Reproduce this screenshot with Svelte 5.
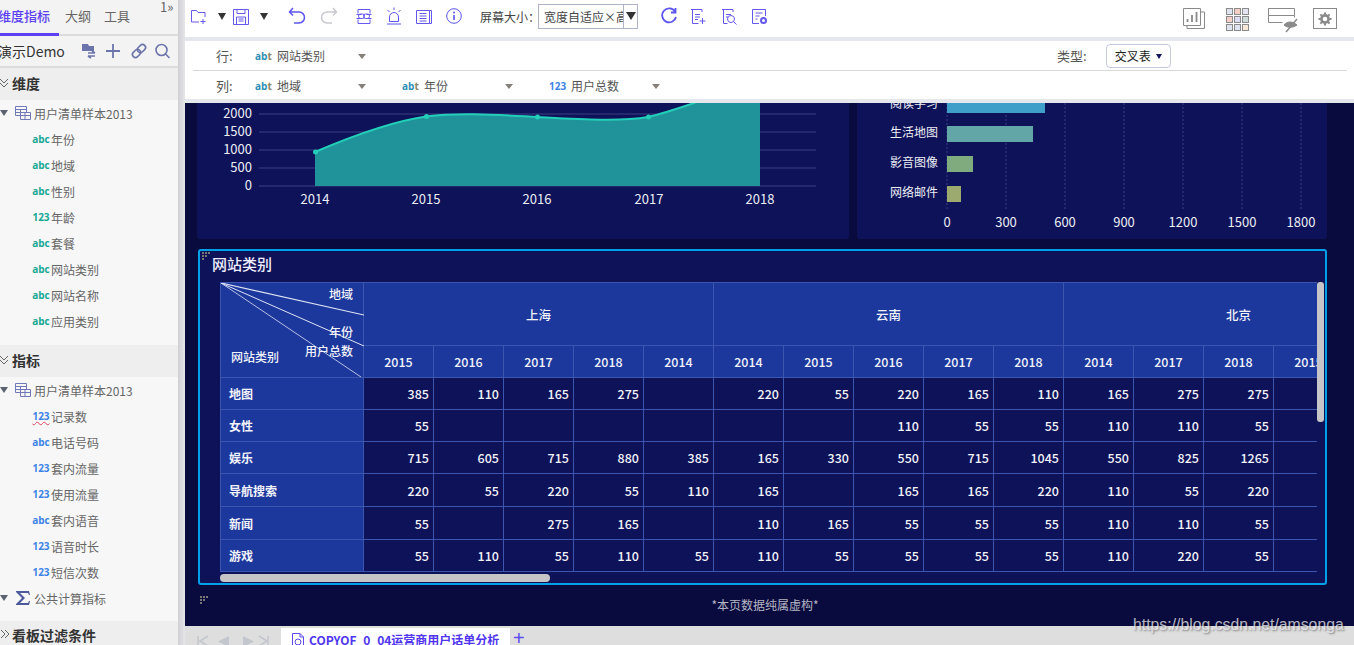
<script>
  const dims = [['abc','年份'],['abc','地域'],['abc','性别'],['123','年龄'],['abc','套餐'],['abc','网站类别'],['abc','网站名称'],['abc','应用类别']];
  const metrics = [['123','记录数',true],['abc','电话号码'],['123','套内流量'],['123','使用流量'],['abc','套内语音'],['123','语音时长'],['123','短信次数']];
  const years = ['2015','2016','2017','2018','2014','2014','2015','2016','2017','2018','2014','2017','2018','2015','2016'];
  const rows = [
    ['地图',385,110,165,275,'',220,55,220,165,110,165,275,275,'',''],
    ['女性',55,'','','','','','',110,55,55,110,110,55,'',''],
    ['娱乐',715,605,715,880,385,165,330,550,715,1045,550,825,1265,'',''],
    ['导航搜索',220,55,220,55,110,165,'',165,165,220,110,55,220,'',''],
    ['新闻',55,'',275,165,'',110,165,55,55,55,110,110,55,'',''],
    ['游戏',55,110,55,110,55,110,55,55,55,55,110,220,55,'','']
  ];
  const heights = [32,32,32,33,33,32];
  const grid = [114,132,150,168,186];
  const yl = ['2000','1500','1000','500','0'];
  const xl = [['2014',315],['2015',426],['2016',537],['2017',649],['2018',760]];
  const ticks = [[0,947],[300,1006],[600,1065],[900,1124],[1200,1183],[1500,1242],[1800,1301]];
  const bars = [['阅读学习',97,98,16,'#3f9fc9'],['生活地图',126,86,16,'#62a6a8'],['影音图像',156,26,16,'#80ab7f'],['网络邮件',186,14,16,'#9ca96f']];
  const tints = ['#dfe3ef','#f5cfc6','#e4e4f0','#f3cfc8','#dcdcf2','#cfdbd8','#dfe3ef','#dfe3f2','#f8e8d8'];
  const curve = 'M315 152C350 137 395 121 426 116.5C460 112 500 115 537 117C575 119 620 122 648 117C670 112 690 104 712 97L760 84';
</script>

<div class="page">
  <aside class="side">
    <div class="tabs">
      <span class="tab on">维度指标</span><span class="tab">大纲</span><span class="tab">工具</span>
      <span class="fold">1»</span>
    </div>
    <div class="demo">
      <span class="demoname">演示Demo</span>
      <svg class="demoicons" width="100" height="20" viewBox="0 0 100 20" fill="none" stroke="#6c75ab" stroke-width="1.6">
        <g transform="translate(5 0)"><path d="M3 3h6l1 2h5v5H3z" fill="#6c75ab" stroke="none"/><path d="M9 12h7M13 10l3 2M16 15H9M12 17l-3-2"/></g>
        <path d="M39 3v14M32 10h14" stroke-width="1.8"/>
        <g transform="rotate(-45 65 10)"><rect x="57" y="7" width="9" height="6" rx="3"/><rect x="64" y="7" width="9" height="6" rx="3"/></g>
        <circle cx="87.500" cy="9" r="5.500"/><path d="M91.500 13l4 4"/>
      </svg>
    </div>
    <div class="sec">
      <svg class="chev" width="10" height="10" viewBox="0 0 10 10" fill="none" stroke="#666"><path d="M0 1l4 4 4-4M0 5l4 4 4-4"/></svg>维度
    </div>
    <div class="tree">
      <div class="node">
        <span class="tri"></span>
        <svg class="ds" width="16" height="14" viewBox="0 0 16 14" fill="none" stroke="#7078b8"><path d="M.5.5h11v9H.5zM.5 3.500h11M5.500 3.500v6M.5 6.500h11"/><path d="M5.500 6.500h10v7h-10z" fill="#f7f7f8"/><path d="M5.500 9.500h10M10 6.500v7"/></svg>
        用户清单样本2013
      </div>
      {#each dims as d}
        <div class="leaf"><span class="t g">{d[0]}</span>{d[1]}</div>
      {/each}
    </div>
    <div class="sec second">
      <svg class="chev" width="10" height="10" viewBox="0 0 10 10" fill="none" stroke="#666"><path d="M0 1l4 4 4-4M0 5l4 4 4-4"/></svg>指标
    </div>
    <div class="tree">
      <div class="node">
        <span class="tri"></span>
        <svg class="ds" width="16" height="14" viewBox="0 0 16 14" fill="none" stroke="#7078b8"><path d="M.5.5h11v9H.5zM.5 3.500h11M5.500 3.500v6M.5 6.500h11"/><path d="M5.500 6.500h10v7h-10z" fill="#f7f7f8"/><path d="M5.500 9.500h10M10 6.500v7"/></svg>
        用户清单样本2013
      </div>
      {#each metrics as d}
        <div class="leaf"><span class="t b" class:wavy={d[2]}>{d[0]}</span>{d[1]}</div>
      {/each}
      <div class="node">
        <span class="tri"></span>
        <svg class="ds" width="16" height="14" viewBox="0 0 16 14"><path d="M1 0h13l1 4h-1l-1-2H5l5 5-5 5h8l1-2h1l-1 4H1v-1l6-6-6-6z" fill="#4f5a9c"/></svg>
        公共计算指标
      </div>
    </div>
    <div class="sec last">
      <svg class="chev" width="10" height="10" viewBox="0 0 10 10" fill="none" stroke="#666"><path d="M1 0l4 4-4 4M5 0l4 4-4 4"/></svg>看板过滤条件
    </div>
  </aside>
  <div class="shade"></div>

  <main class="main">
    <header class="bar">
      <div class="tools">
        <svg width="16" height="17" viewBox="0 0 16 17" fill="none" stroke="#6459ee"><path d="M8 14H.5V2.500h5l1.500 2h7V9M12 11v5M9.500 13.500h5"/></svg>
        <span class="drop"></span>
        <svg class="save" width="16" height="17" viewBox="0 0 16 17" fill="none" stroke="#6459ee"><path d="M.5 1.500h15v15H.5zM4 1.500v4h8v-4M3.500 16v-7h9v7M5.500 11h5M5.500 13h5"/></svg>
        <span class="drop"></span>
        <svg class="undo" width="18" height="18" viewBox="0 0 18 18" fill="none" stroke="#5b55ee" stroke-width="1.500"><path d="M5 1L1.500 5 5 8.500M2 5h9a5.500 5.500 0 0 1 0 11H6"/></svg>
        <svg class="redo" width="18" height="18" viewBox="0 0 18 18" fill="none" stroke="#c9c9d0" stroke-width="1.500"><path d="M13 1l3.500 4L13 8.500M16 5H7a5.500 5.500 0 0 0 0 11h5"/></svg>
        <svg class="ln" width="16" height="17" viewBox="0 0 16 17" fill="none" stroke="#6459ee"><path d="M2 5.500V1.500h12v4M2 11.500v4h12v-4M.5 6.500h5M10.500 6.500h5M.5 10.500h5M10.500 10.500h5"/><rect x="2.500" y="6" width="6" height="4.500" rx="2"/><rect x="7.500" y="6" width="6" height="4.500" rx="2"/></svg>
        <svg class="al" width="16" height="18" viewBox="0 0 16 18" fill="none" stroke="#5b55ee"><path d="M1 17h14M3.500 14.500h9V10a4.500 4.500 0 0 0-9 0zM8 .5v2.500M1.500 3l2 2M14.500 3l-2 2"/></svg>
        <svg class="li" width="16" height="16" viewBox="0 0 16 16" fill="none" stroke="#6459ee"><path d="M.5 2.500h13v13H.5zM13.500 2.500h2v13h-2M3.500 5.500h7M3.500 8h7M3.500 10.500h7M3.500 13h7"/></svg>
        <svg class="in" width="16" height="16" viewBox="0 0 16 16" fill="none" stroke="#5b55ee"><circle cx="8" cy="8" r="7.300"/><path d="M8 7v5" stroke-width="1.600"/><circle cx="8" cy="4.500" r="1" fill="#5b55ee" stroke="none"/></svg>
        <span class="size">屏幕大小：</span>
        <div class="sel"><span class="seltxt">宽度自适应×高度自适应</span><span class="selbtn"><i class="drop"></i></span></div>
        <svg class="rf" width="18" height="18" viewBox="0 0 18 18" fill="none" stroke="#5b55ee" stroke-width="1.800"><path d="M15 4.500A7 7 0 1 0 16 10M15.500 1v4.500H11"/></svg>
        <svg class="r2" width="16" height="17" viewBox="0 0 16 17" fill="none" stroke="#6459ee"><path d="M1 1.500h11v2.500M2.500 2v13.500h6M5 6.500h5M5 9h5M5 11.500h3M12.500 10v6M9.500 13h6"/></svg>
        <svg class="r3" width="16" height="17" viewBox="0 0 16 17" fill="none" stroke="#6459ee"><path d="M1 1.500h11v2.500M2.500 2v13.500h4M5 6.500h5M5 9h2"/><circle cx="10" cy="11" r="3.500"/><path d="M12.500 13.500l3 3"/></svg>
        <svg class="r4" width="16" height="17" viewBox="0 0 16 17" fill="none" stroke="#6459ee"><path d="M7 15.500H.5V1.500h13V8M3.500 5h7M3.500 8h4M3.500 11h2"/><circle cx="11.500" cy="12.500" r="2.500" stroke-width="2"/></svg>
      </div>
      <div class="rtools">
        <svg width="22" height="21" viewBox="0 0 22 21" fill="none" stroke="#8a8a8a"><path d="M.5.500h17v17H.5zM17.500 4h4v16.500H4v-3"/><path d="M4.500 14v-3M9 14V7M13.500 14V4" stroke-width="1.800"/></svg>
        <div class="palette">{#each tints as c}<i style="background:{c}"></i>{/each}</div>
        <svg class="eye" width="31" height="30" viewBox="0 0 31 30" fill="none" stroke="#8a8a8a"><path d="M.5 4.500h26v7h-26zM.5 4.500v14h14M26.500 11.500v2"/><path d="M16 21c3-4 9-4 13 0-4 3-10 3-13 0z" fill="#8a8a8a"/><path d="M18 28L29 15" stroke-width="1.500"/></svg>
        <div class="gear">
          <svg width="14" height="14" viewBox="0 0 14 14" fill="none" stroke="#8a8a8a"><circle cx="7" cy="7" r="3.600" stroke-width="2.600"/><path d="M7 .5v2M7 11.500v2M.5 7h2M11.500 7h2M2.400 2.400l1.400 1.400M10.200 10.200l1.400 1.400M11.600 2.400l-1.400 1.400M3.800 10.200l-1.400 1.400" stroke-width="2"/></svg>
        </div>
      </div>
    </header>

    <section class="filters">
      <div class="frow top">
        <span class="flabel">行:</span>
        <div class="pick"><b class="abt">ab<em>t</em></b><span>网站类别</span><i class="caret"></i></div>
        <div class="type"><span>类型:</span><div class="typesel">交叉表<i class="drop small"></i></div></div>
      </div>
      <div class="frow">
        <span class="flabel">列:</span>
        <div class="pick"><b class="abt">ab<em>t</em></b><span>地域</span><i class="caret"></i></div>
        <div class="pick"><b class="abt">ab<em>t</em></b><span>年份</span><i class="caret"></i></div>
        <div class="pick"><b class="n123">123</b><span>用户总数</span><i class="caret"></i></div>
      </div>
    </section>

    <section class="canvas">
      <div class="charts">
        <div class="card c1">
          <svg width="652" height="136" viewBox="197 103 652 136">
            {#each grid as g, i}
              <line x1="259" x2="816" y1={g} y2={g} stroke="#3a3f80"/>
              <text x="252" y={g + 4} text-anchor="end" class="ax">{yl[i]}</text>
            {/each}
            <path d={curve + 'V186H315Z'} fill="#209299"/>
            <path d={curve} fill="none" stroke="#22cfb8" stroke-width="2"/>
            <circle cx="315.500" cy="152" r="2.500" fill="#22cfb8"/><circle cx="426.500" cy="116.500" r="2.500" fill="#22cfb8"/><circle cx="537.500" cy="117" r="2.500" fill="#22cfb8"/><circle cx="648.500" cy="117" r="2.500" fill="#22cfb8"/>
            {#each xl as x}<text x={x[1]} y="204" text-anchor="middle" class="ax">{x[0]}</text>{/each}
          </svg>
        </div>
        <div class="card c2">
          <svg width="470" height="136" viewBox="857 103 470 136">
            {#each ticks as t}
              <line x1={t[1]} x2={t[1]} y1="103" y2="209" stroke="#3a3f80" stroke-dasharray="2 2"/>
              <text x={t[1]} y="227" text-anchor="middle" class="ax">{t[0]}</text>
            {/each}
            {#each bars as b}
              <rect x="947" y={b[1]} width={b[2]} height={b[3]} fill={b[4]}/>
              <text x="938" y={b[1] + 11} text-anchor="end" class="lb">{b[0]}</text>
            {/each}
          </svg>
        </div>
      </div>

      <div class="panel">
        <svg class="grip" width="8" height="8" viewBox="0 0 8 8" fill="#777"><path d="M0 0h2v2H0zM3 0h2v2H3zM6 0h2v2H6zM0 3h2v2H0zM3 3h2v2H3zM0 6h2v2H0z"/></svg>
        <div class="ptitle">网站类别</div>
        <div class="tw">
          <table>
            <colgroup><col class="c0"/>{#each Array(15) as _}<col class="cn"/>{/each}</colgroup>
            <thead>
              <tr class="h1">
                <th rowspan="2" class="corner">
                  <svg class="diag" width="143" height="95" viewBox="0 0 143 95" fill="none" stroke="#dfe3f5">
                    <path d="M0 0L143 32" stroke-width="1.200"/><path d="M0 0L143 63"/><path d="M0 0L140 94" stroke-width=".8"/>
                  </svg>
                  <span class="cl a">地域</span><span class="cl b2">年份</span><span class="cl c3">用户总数</span><span class="cl d">网站类别</span>
                </th>
                <th colspan="5">上海</th><th colspan="5">云南</th><th colspan="5">北京</th>
              </tr>
              <tr class="h2">{#each years as y}<th>{y}</th>{/each}</tr>
            </thead>
            <tbody>
              {#each rows as r, i}
                <tr style="height:{heights[i]}px">
                  <th class="rh">{r[0]}</th>
                  {#each r.slice(1) as v}<td>{v}</td>{/each}
                </tr>
              {/each}
            </tbody>
          </table>
        </div>
        <span class="hbar"></span>
        <span class="vbar"></span>
      </div>

      <div class="foot">
        <svg class="grip2" width="8" height="8" viewBox="0 0 8 8" fill="#777"><path d="M0 0h2v2H0zM3 0h2v2H3zM6 0h2v2H6zM0 3h2v2H0zM3 3h2v2H3zM0 6h2v2H0z"/></svg>
        *本页数据纯属虚构*
      </div>
    </section>

    <footer class="sheets">
      <svg class="nav" width="72" height="12" viewBox="0 0 72 12" fill="#c3c6cc">
        <path d="M1 1v10M11 1L3 6l8 5" fill="none" stroke="#c3c6cc" stroke-width="1.500"/><path d="M32 1L21 6.500 32 12zM46 1l11 5.500L46 12z"/><path d="M62 1l8 5-8 5M71 1v10" fill="none" stroke="#c3c6cc" stroke-width="1.500"/>
      </svg>
      <div class="sheet">
        <svg width="14" height="16" viewBox="0 0 14 16" fill="none" stroke="#5b4bf0"><path d="M9 .5H1.500v15h11V4zM9 .5V4h3.500"/><circle cx="7" cy="9" r="3"/></svg>
        COPYOF_0_04运营商用户话单分析
      </div>
      <span class="plus">+</span>
    </footer>
  </main>
  <span class="wm">https://blog.csdn.net/amsonga</span>
</div>

<style>
  :global(body) { margin: 0; background: #fff; }
  * { box-sizing: border-box; }
  .page { position: relative; display: flex; width: 1354px; height: 645px; overflow: hidden; font-family: "Noto Sans CJK SC", "Noto Sans", sans-serif; color: #444; font-size: 12px; }

  .side { width: 178px; flex: none; background: #f7f7f8; overflow: hidden; }
  .shade { width: 7px; flex: none; background: linear-gradient(90deg, #cfcfd4, #e6e6ea); }
  .tabs { position: relative; height: 36px; display: flex; border-bottom: 2px solid #dcdcdc; background: #f3f3f4; }
  .tab { font-size: 13px; line-height: 32px; color: #666; margin-right: 13px; }
  .tab.on { width: 59px; margin-right: 6px; color: #5b3ff0; text-indent: -2px; font-weight: 500; border-bottom: 3px solid #5b3ff0; height: 36px; white-space: nowrap; }
  .fold { position: absolute; left: 160px; top: -3px; font-size: 13px; color: #666; }
  .demo { height: 32px; display: flex; align-items: center; justify-content: space-between; border-bottom: 2px solid #dcdcdc; background: #f3f3f4; }
  .demoname { margin-left: -2px; font-size: 14px; color: #333; }
  .demoicons { margin-right: 4px; }
  .sec { height: 32px; padding-bottom: 3px; background: #eeeeef; font-size: 14px; font-weight: 700; color: #333; display: flex; align-items: center; gap: 2px; }
  .sec.second { margin-top: 11px; }
  .chev { flex: none; margin-top: 1px; }
  .sec.last { margin-top: 10px; height: 30px; }
  .node, .leaf { height: 26px; display: flex; align-items: center; color: #666; white-space: nowrap; }
  .tri { width: 0; height: 0; margin: 0 6px 0 0; border: 4px solid transparent; border-top: 6px solid #5c6270; border-bottom: 0; }
  .ds { margin: 0 3px 0 1px; flex: none; }
  .leaf { padding-left: 31px; }
  .t { width: 20px; font-size: 10px; font-weight: 700; text-align: center; font-family: "Open Sans", sans-serif; }
  .t.g { color: #17a893; }
  .t.b { color: #3d84e6; }
  .wavy { text-decoration: underline wavy #e0455f 1px; }

  .main { flex: 1; min-width: 0; display: flex; flex-direction: column; background: #e6e7ec; }
  .bar { height: 37px; flex: none; background: #fff; display: flex; align-items: center; justify-content: space-between; padding: 0 17px 0 6px; }
  .tools { display: flex; align-items: center; padding-bottom: 5px; }
  .drop { display: inline-block; width: 0; height: 0; margin: 0 0 0 11px; border: 4px solid transparent; border-top: 7px solid #333; border-bottom: 0; }
  .save { margin-left: 7px; }
  .undo { margin-left: 20px; }
  .redo { margin-left: 14px; }
  .ln { margin-left: 18px; }
  .al, .li, .in { margin-left: 14px; }
  .size { margin-left: 18px; color: #444; white-space: nowrap; }
  .sel { width: 100px; height: 25px; display: flex; border: 1px solid #aeb3c7; margin-left: -2px; background: #fff; color: #444; }
  .seltxt { width: 84px; overflow: hidden; white-space: nowrap; line-height: 23px; padding-left: 5px; }
  .selbtn { flex: 1; border-left: 1px solid #aeb3c7; display: flex; align-items: center; justify-content: center; }
  .selbtn .drop { margin: 0; border-width: 5px; border-top-width: 8px; border-bottom-width: 0; }
  .rf { margin-left: 22px; }
  .r2 { margin-left: 12px; }
  .r3, .r4 { margin-left: 15px; }
  .rtools { display: flex; align-items: center; }
  .palette { display: grid; grid-template-columns: repeat(3, 7px); grid-auto-rows: 7px; gap: 1px; width: 23px; height: 21px; margin-left: 21px; }
  .palette i { display: block; border: 1px solid #8a8a8a; }
  .eye { margin-left: 19px; }
  .gear { width: 24px; height: 21px; border: 1px solid #8a8a8a; display: flex; align-items: center; justify-content: center; margin-left: 14px; }

  .filters { margin-top: 4px; height: 58px; flex: none; background: #fff; padding: 0 7px 0 8px; }
  .frow { height: 29px; display: flex; align-items: center; color: #555; }
  .frow.top { height: 30px; border-bottom: 1px solid #d9d9d9; }
  .flabel { width: 62px; padding-left: 23px; font-size: 13px; color: #555; flex: none; }
  .pick { width: 147px; flex: none; display: flex; align-items: center; position: relative; white-space: nowrap; }
  .abt { width: 22px; font-size: 10px; font-family: "Open Sans", sans-serif; color: #2d8fb5; }
  .abt em { color: #8c8468; font-style: normal; }
  .n123 { width: 22px; font-size: 10px; font-family: "Open Sans", sans-serif; color: #3d84e6; }
  .caret { position: absolute; left: 103px; top: 7px; border: 4px solid transparent; border-top: 5px solid #85817a; border-bottom: 0; }
  .type { margin-left: 655px; display: flex; align-items: center; gap: 19px; font-size: 13px; }
  .typesel { width: 65px; height: 24px; border: 1px solid #c5c9de; border-radius: 4px; color: #222; font-size: 12px; line-height: 22px; padding-left: 8px; white-space: nowrap; }
  .drop.small { margin: 0 0 2px 5px; border-width: 3px; border-top-width: 5px; border-bottom-width: 0; border-top-color: #14155e; }

  .canvas { margin-top: 4px; height: 523px; flex: none; background: #090a3e; padding-left: 12px; overflow: hidden; position: relative; }
  .charts { display: flex; gap: 8px; height: 136px; }
  .card { background: #0e1258; height: 136px; border-radius: 0 0 3px 3px; }
  .c1 { width: 652px; }
  .c2 { width: 470px; }
  .card svg { display: block; }
  .ax { fill: #eceef6; font-size: 13px; font-family: "Noto Sans CJK SC", sans-serif; }
  .lb { fill: #eceef6; font-size: 12px; font-family: "Noto Sans CJK SC", sans-serif; }

  .panel { position: relative; margin: 10px 0 0 1px; width: 1129px; height: 336px; background: #0e1258; border: 2px solid #00a0e9; border-radius: 3px; }
  .grip { position: absolute; left: 2px; top: 1px; }
  .ptitle { height: 31px; padding: 2px 0 0 12px; color: #eef; font-size: 15px; font-weight: 500; }
  .tw { margin-left: 20px; width: 1097px; height: 293px; overflow: hidden; }
  table { border-collapse: collapse; table-layout: fixed; width: 1193px; color: #f2f3fa; font-size: 12.500px; }
  .c0 { width: 143px; }
  .cn { width: 70px; }
  th, td { border: 1px solid #3c55ae; padding: 0; font-weight: 500; }
  thead th { background: #1c389c; text-align: center; }
  .h1 { height: 63px; }
  .h2 { height: 32px; }
  td { text-align: right; padding-right: 4px; }
  .rh { background: #1c389c; text-align: left; padding-left: 8px; font-size: 12px; font-weight: 700; }
  .corner { position: relative; }
  .diag { position: absolute; left: 0; top: 0; }
  .cl { position: absolute; font-size: 12px; line-height: 14px; color: #f2f3fa; white-space: nowrap; }
  .a { right: 10px; top: 4px; }
  .b2 { right: 10px; top: 42px; }
  .c3 { right: 10px; top: 61px; }
  .d { left: 10px; top: 67px; }
  .hbar { position: absolute; left: 20px; top: 323px; width: 330px; height: 8px; background: #c6c6c8; border-radius: 4px; }
  .vbar { position: absolute; left: 1117px; top: 31px; width: 7px; height: 140px; background: #c6c6c8; border-radius: 3px; }
  .foot { position: relative; width: 1136px; height: 40px; text-align: center; color: #b5b6c4; line-height: 40px; font-size: 12px; }
  .grip2 { position: absolute; left: 3px; top: 11px; }

  .sheets { flex: 1; background: #dedede; display: flex; align-items: flex-start; padding: 2px 0 0 12px; overflow: hidden; }
  .nav { margin-top: 7px; flex: none; }
  .sheet { margin-left: 12px; width: 229px; height: 30px; background: #fff; display: flex; align-items: flex-start; gap: 4px; padding: 3px 0 0 10px; color: #4f35f0; font-weight: 700; font-size: 12px; line-height: 18px; white-space: nowrap; }
  .sheet svg { margin-top: 2px; flex: none; }
  .plus { margin-left: 3px; color: #5b4bf0; font-size: 20px; line-height: 20px; font-family: "Liberation Sans", sans-serif; }
  .wm { position: absolute; left: 1133px; top: 616px; font-family: "Liberation Sans", sans-serif; font-size: 15.800px; color: rgba(240,240,245,.75); text-shadow: 1px 1px 2px rgba(0,0,0,.45); }
</style>
